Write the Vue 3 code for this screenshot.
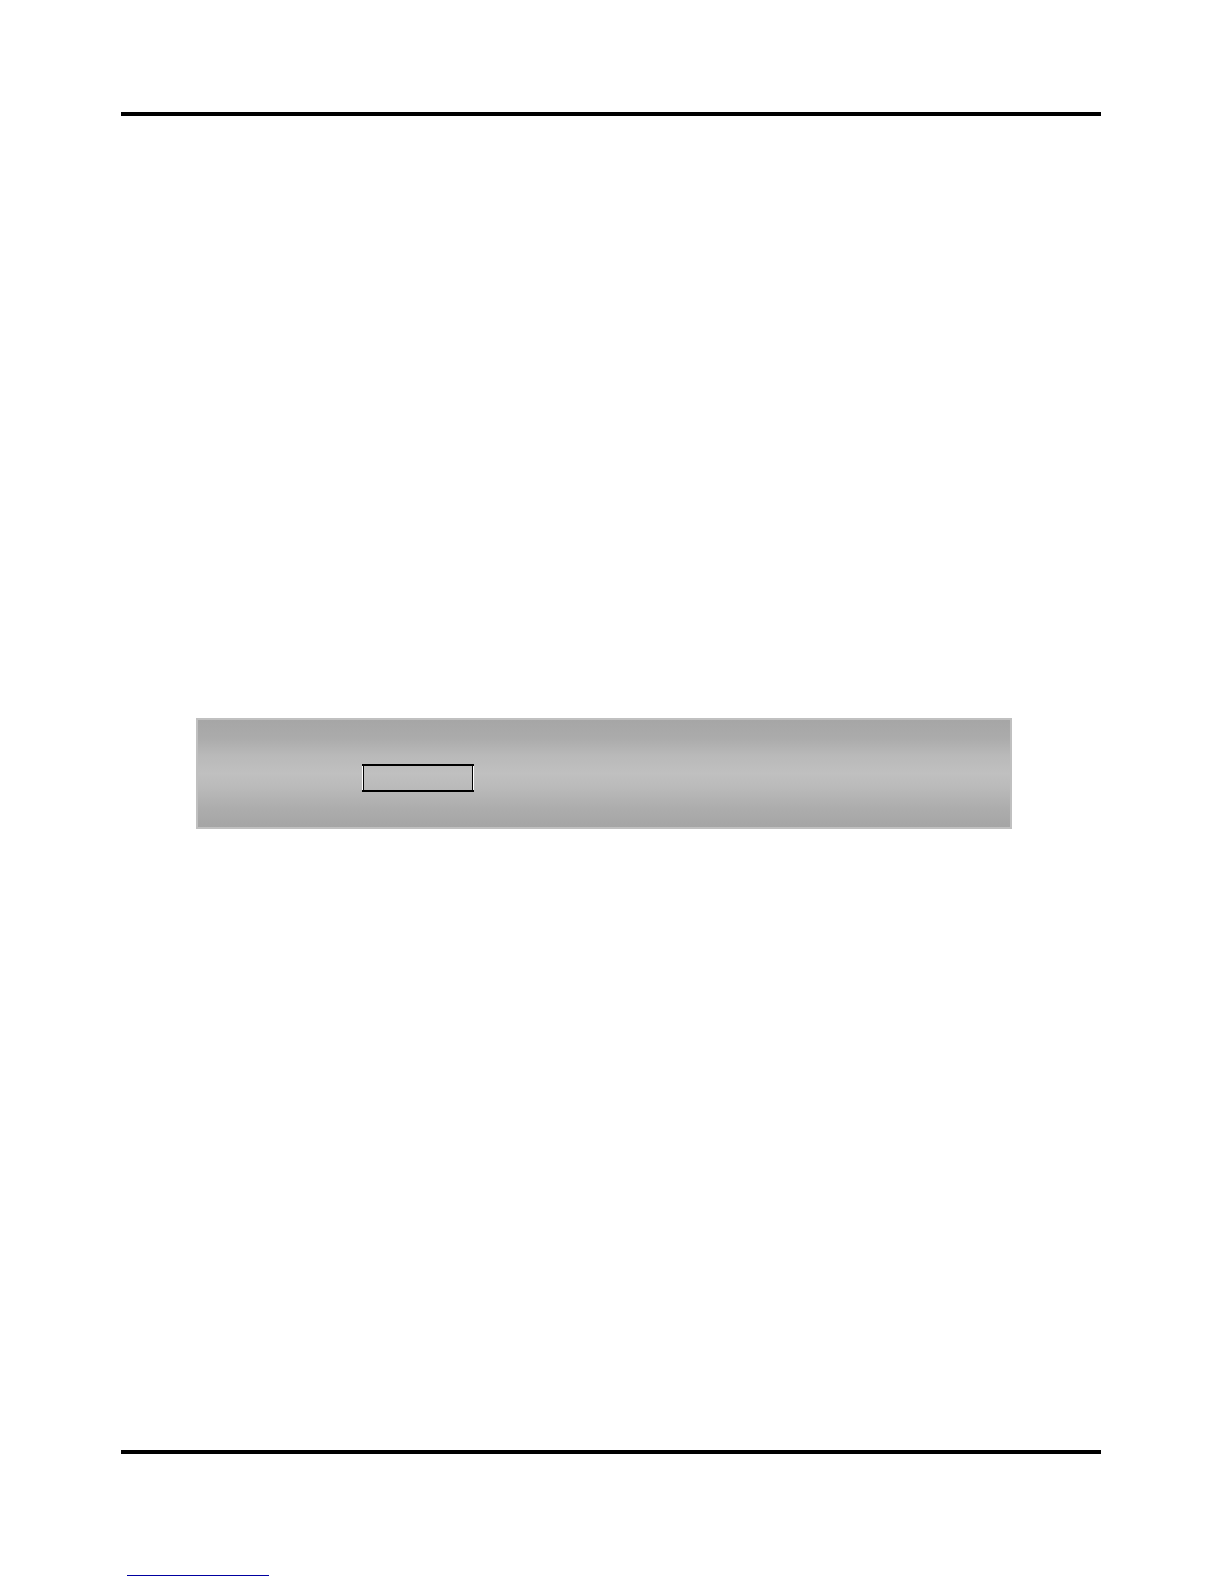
<template>
  <div class="page">
    <main class="sheet">
      <div class="panel">
        <input v-model="value" class="field" type="text" aria-label="Value" />
      </div>
    </main>
    <footer class="footer">
      <a class="footer-link" href="#" aria-label="Home"></a>
    </footer>
  </div>
</template>

<script setup>
import { ref } from 'vue'

const value = ref('')
</script>

<style>
body {
  margin: 0;
  background: #fff;
}
</style>

<style scoped>
.page {
  display: flex;
  flex-direction: column;
  box-sizing: border-box;
  min-height: 100vh;
  padding: 112px 123px 8px 121px;
  font-family: "Liberation Sans", Arial, sans-serif;
}

/* thick rules above and below the body of the page */
.sheet {
  flex: 1;
  padding: 602px 89px 0 75px;
  border-top: 4px solid #000;
  border-bottom: 4px solid #000;
}

.panel {
  display: flex;
  align-items: flex-start;
  box-sizing: border-box;
  height: 111px;
  padding: 44px 164px 0;
  border: 2px solid #c0c0c0;
  background: linear-gradient(
    to bottom,
    #a6a6a6 0%,
    #ababab 17%,
    #b9b9b9 33%,
    #c0c0c0 50%,
    #bababa 63%,
    #adadad 82%,
    #a5a5a5 100%
  );
}

/* black frame with a light edge on the left and right */
.field {
  box-sizing: border-box;
  width: 112px;
  height: 28px;
  padding: 0 4px;
  border: 0;
  border-radius: 0;
  outline: none;
  font: inherit;
  font-size: 14px;
  background:
    linear-gradient(#000, #000) top / 100% 2px no-repeat,
    linear-gradient(#000, #000) bottom / 100% 2px no-repeat,
    linear-gradient(#fff, #fff) left / 1px 100% no-repeat,
    linear-gradient(#fff, #fff) right / 1px 100% no-repeat,
    linear-gradient(#000, #000) left / 2px 100% no-repeat,
    linear-gradient(#000, #000) right / 2px 100% no-repeat;
}

.footer {
  display: flex;
  padding: 104px 6px 0;
}

.footer-link {
  width: 142px;
  height: 17px;
  border-bottom: 1px solid #0000a0;
}
</style>
